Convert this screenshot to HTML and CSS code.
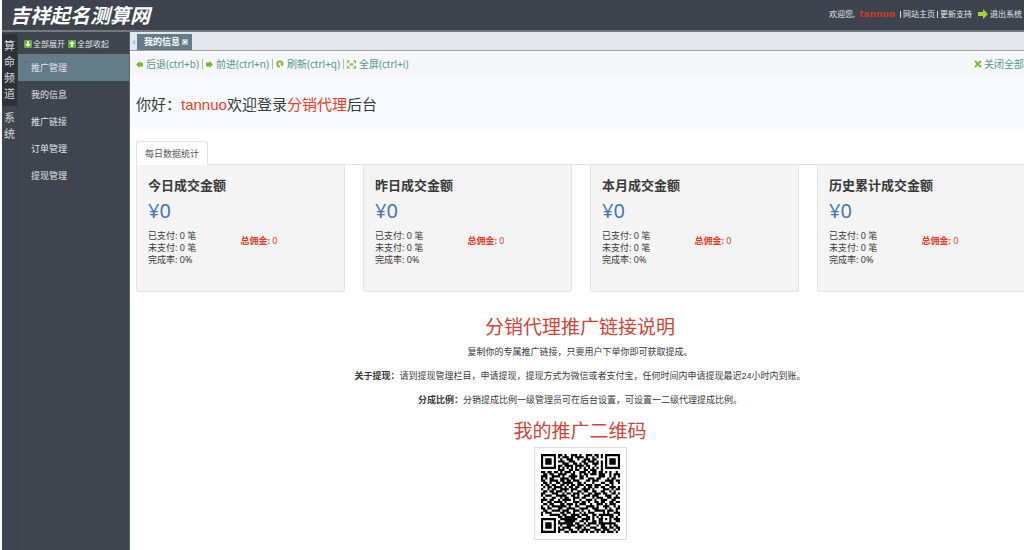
FILE: index.html
```html
<!DOCTYPE html>
<html lang="zh-CN">
<head>
<meta charset="utf-8">
<title>吉祥起名测算网</title>
<link rel="stylesheet" href="styles.css">
</head>
<body>
<div class="app">
  <header class="header">
    <h1 class="logo">吉祥起名测算网</h1>
    <nav class="account">
      <span>欢迎您,</span><strong class="user">tannuo</strong><i class="bar"></i><a href="#">网站主页</a><i class="bar"></i><a href="#">更新支持</a>
      <a href="#" class="logout"><svg width="10" height="10" viewBox="0 0 10 10"><path d="M0 3h5V0l5 5-5 5V7H0z" fill="#a5d534"/></svg>退出系统</a>
    </nav>
  </header>
  <div class="body">
    <nav class="rail">
      <button class="rail-item active">算命频道</button>
      <button class="rail-item">系统</button>
    </nav>
    <aside class="side">
      <div class="fold">
        <button><svg width="8" height="8" viewBox="0 0 8 8"><rect width="8" height="8" rx="1" fill="#62b32b"/><path d="M3 1h2v3h2L4 7 1 4h2z" fill="#fff"/></svg>全部展开</button>
        <button><svg width="8" height="8" viewBox="0 0 8 8"><rect width="8" height="8" rx="1" fill="#62b32b"/><path d="M3 7h2V4h2L4 1 1 4h2z" fill="#fff"/></svg>全部收起</button>
      </div>
      <a href="#" class="menu-item selected"><svg class="caret" width="5" height="3" viewBox="0 0 5 3"><path d="M0 0h5L2.500 3z" fill="#446f98"/></svg>推广管理</a>
      <a href="#" class="menu-item">我的信息</a>
      <a href="#" class="menu-item">推广链接</a>
      <a href="#" class="menu-item">订单管理</a>
      <a href="#" class="menu-item">提现管理</a>
    </aside>
    <main class="main">
      <div class="tabs">
        <button class="scroll" aria-label="向左"><svg width="3" height="5" viewBox="0 0 3 5"><path d="M3 0v5L0 2.500z" fill="#a9b9cf"/></svg></button>
        <button class="tab">我的信息<svg width="6" height="6" viewBox="0 0 6 6"><rect width="6" height="6" rx="1" fill="#a9bfe2"/><path d="M1.500 1.500l3 3m0-3l-3 3" stroke="#fff"/></svg></button>
      </div>
      <div class="toolbar">
        <button><svg width="7" height="7" viewBox="0 0 7 7"><path d="M0 3.500L3.500 0v1.500H7v4H3.500V7z" fill="#7cb82f"/></svg>后退(ctrl+b)</button>
        <button><svg width="7" height="7" viewBox="0 0 7 7"><path d="M7 3.500L3.500 0v1.500H0v4h3.500V7z" fill="#7cb82f"/></svg>前进(ctrl+n)</button>
        <button><svg width="8" height="8" viewBox="0 0 9 9"><path d="M4.500 7.500A3 3 0 1 1 7.300 4" fill="none" stroke="#7cb82f" stroke-width="2"/><path d="M4.500 4H9L7 7z" fill="#7cb82f"/></svg>刷新(ctrl+q)</button>
        <button><svg width="9" height="9" viewBox="0 0 10 9"><path d="M.7 3V.7H3M7 .7h2.300V3M9.300 6v2.300H7M3 8.300H.7V6" fill="none" stroke="#7cb82f" stroke-width="1.400"/><path d="M3 3h4v3H3z" fill="#9ccc5c"/></svg>全屏(ctrl+i)</button>
        <button class="close-all"><svg width="8" height="8" viewBox="0 0 8 8"><path d="M1 1l6 6m0-6L1 7" stroke="#7cb82f" stroke-width="1.800"/></svg>关闭全部</button>
      </div>
      <h2 class="welcome">你好：<em>tannuo</em>欢迎登录<em>分销代理</em>后台</h2>
      <div class="content">
        <div class="stat-tabs"><button class="stat-tab">每日数据统计</button></div>
        <div class="cards">
          <section class="card"><h3>今日成交金额</h3><p class="amount">¥0</p><div class="detail"><div>已支付: 0 笔<br>未支付: 0 笔<br>完成率: 0%</div><div class="fee"><b>总佣金:</b> 0</div></div></section>
          <section class="card"><h3>昨日成交金额</h3><p class="amount">¥0</p><div class="detail"><div>已支付: 0 笔<br>未支付: 0 笔<br>完成率: 0%</div><div class="fee"><b>总佣金:</b> 0</div></div></section>
          <section class="card"><h3>本月成交金额</h3><p class="amount">¥0</p><div class="detail"><div>已支付: 0 笔<br>未支付: 0 笔<br>完成率: 0%</div><div class="fee"><b>总佣金:</b> 0</div></div></section>
          <section class="card"><h3>历史累计成交金额</h3><p class="amount">¥0</p><div class="detail"><div>已支付: 0 笔<br>未支付: 0 笔<br>完成率: 0%</div><div class="fee"><b>总佣金:</b> 0</div></div></section>
        </div>
        <section class="guide">
          <h2>分销代理推广链接说明</h2>
          <p>复制你的专属推广链接，只要用户下单你即可获取提成。</p>
          <p><b>关于提现：</b>请到提现管理栏目，申请提现，提现方式为微信或者支付宝，任何时间内申请提现最迟24小时内到账。</p>
          <p><b>分成比例：</b>分销提成比例一级管理员可在后台设置，可设置一二级代理提成比例。</p>
          <h2>我的推广二维码</h2>
          <div class="qr"><svg id="qr" width="79" height="79" viewBox="0 0 37 37" role="img" aria-label="二维码"><path fill="#000"/></svg></div>
        </section>
      </div>
    </main>
  </div>
</div>
<script src="qr.js"></script>
</body>
</html>
```
FILE: styles.css
```css
* { box-sizing: border-box; }
body {
  margin: 0;
  background: #fff;
  color: #3a3a3a;
  font: 9px/12px "Noto Sans", "Noto Sans CJK SC", sans-serif;
  overflow: hidden;
}
h1, h2, h3, p { margin: 0; font-weight: 400; }
button { border: 0; padding: 0; margin: 0; background: none; color: inherit; font: inherit; white-space: nowrap; }
a { color: inherit; text-decoration: none; }
svg { display: block; flex: none; }

.app { display: flex; flex-direction: column; min-height: 100vh; padding-left: 2px; }
.header {
  display: flex;
  align-items: center;
  justify-content: space-between;
  height: 32px;
  padding: 0 2px 0 8px;
  background: #3e444d;
  border-bottom: 2px solid #76797c;
  color: #e4e6e8;
}
.logo { color: #fff; font: italic 700 20px/30px "Noto Sans CJK SC", sans-serif; }
.account { display: flex; align-items: center; padding-bottom: 2px; font-size: 8px; white-space: nowrap; }
.user { margin: 0 3px 0 4px; color: #cf3a2e; font: bold 9px/12px "DejaVu Sans", sans-serif; }
.bar { width: 1px; height: 7px; margin: 0 2px; background: #d5d7da; }
.logout { display: flex; align-items: center; gap: 2px; margin-left: 6px; }

.body { display: flex; flex: 1; }
.rail { width: 16px; padding-top: 2px; background: #3e454e; border-right: 1px solid #373d46; }
.rail-item { display: block; width: 100%; padding: 4px 2px; font-size: 11px; line-height: 16px; white-space: normal; word-break: break-all; color: #d5d8dc; }
.rail-item.active { background: #2e3238; }
.side { width: 112px; flex: none; background: #3e454e; border-right: 1px solid #59616b; color: #e0e3e6; }
.fold { display: flex; gap: 3px; height: 22px; padding: 2px 0 0 6px; font-size: 8px; }
.fold button { display: flex; align-items: center; gap: 1px; }
.menu-item { display: block; position: relative; padding-left: 13px; line-height: 27px; }
.selected { background: #647b88; }
.caret { position: absolute; left: 5px; top: 7px; }

.main { flex: 1; min-width: 0; overflow: hidden; }
.tabs { display: flex; align-items: flex-end; height: 19px; background: #e4e7ec; border-bottom: 1px solid #98a1ab; }
.scroll { display: flex; align-items: center; justify-content: center; width: 7px; height: 15px; background: #dfe8f5; }
.tab { display: flex; align-items: center; gap: 2px; height: 16px; padding: 0 4px 0 7px; background: #647b88; color: #fff; font-weight: 700; }
.toolbar { display: flex; align-items: center; height: 22px; margin-top: 2px; padding-left: 6px; background: #f5f6fa; color: #589888; font-size: 10px; }
.toolbar button { display: flex; align-items: center; gap: 3px; }
.toolbar button + button { margin-left: 3px; padding-left: 3px; border-left: 1px solid #b5b8bb; line-height: 10px; }
.toolbar .close-all { margin-left: auto; border-left: 0; gap: 2px; }
.welcome { padding: 16px 6px 10px; background: #f7fbff; font: 15px/28px "Liberation Sans", "Noto Sans CJK SC", sans-serif; }
.welcome em { color: #f23a22; font-style: normal; }

.content { padding: 12px 0 0 6px; }
.stat-tabs { display: flex; border-bottom: 1px solid #e2e2e2; }
.stat-tab { height: 24px; margin-bottom: -1px; padding: 0 8px; border: 1px solid #e2e2e2; border-bottom: 0; border-radius: 3px 3px 0 0; background: #fff; color: #555; }
.cards { display: grid; grid-template-columns: repeat(4, 1fr); gap: 18px; margin-right: -2px; }
.card { padding: 10px 11px 25px; background: #f4f4f4; border: 1px solid #e3e3e3; border-top: 0; border-radius: 0 0 3px 3px; white-space: nowrap; }
.card h3 { font-size: 13px; line-height: 20px; font-weight: 700; }
.amount { margin: 4px 0 7px; color: #4477b8; font: 20px/24px "Noto Sans", sans-serif; }
.detail { display: grid; grid-template-columns: 1fr 1fr; align-items: center; }
.fee { padding-bottom: 14px; color: #ea3a26; }

.guide { padding-top: 22px; text-align: center; }
.guide h2 { color: #d14338; font-size: 19px; line-height: 26px; }
.guide p { margin: 6px 0 12px; font-family: "Liberation Sans", "Noto Sans CJK SC", sans-serif; }
.qr { display: inline-block; margin-top: 3px; padding: 6px; border: 1px solid #ddd; background: #fff; }
```
FILE: qr.js
```js
const rows = [
  '1111111011010011101001110110101111111',
  '1000001010111010111101001010101000001',
  '1011101001001110010011101100001011101',
  '1011101011100111000110111010101011101',
  '1011101000111001101011001110101011101',
  '1000001011011110111101100100101000001',
  '1111111010101010101010101010101111111',
  '0000000011100110110011011100100000000',
  '1101101101011101001110101101101010010',
  '0110110011110011001011011101110010111',
  '1110011110100111101101000001110010101',
  '1010110001111011001100111011000101100',
  '1100111101101101110001101110001111011',
  '0110100110111110011010001000110011001',
  '1011011001101011011101110111001101000',
  '0101101111010110110010110110110011101',
  '1001011001111011100111101000011101011',
  '0110110111010010011011001100110010100',
  '1100011100101101110100110111011001101',
  '1011100111110011010011101110001110010',
  '0100011001011001110110001011100110111',
  '1110110010111101001001110100111001100',
  '1001101111010001110110100110110011011',
  '0110110001101110101110010011101011100',
  '1001011111110100110001111010011100101',
  '1101100011001111001111001110001010011',
  '0110011110111001110100100111110111010',
  '1011100001101101001010111000010100111',
  '1000111110110011110111001101111111001',
  '0000000011011111011001101010100011010',
  '1111111001111111100111101001101010111',
  '1000001010011111001101001101100010011',
  '1011101011111110110010111101111111100',
  '1011101001001111011101100010110010110',
  '1011101010111100111010011100111011011',
  '1000001011100110010111100111011100101',
  '1111111010011011101101011010110111010'
];
const path = rows.flatMap((row, y) =>
  [...row].map((cell, x) => cell === '1' ? `M${x} ${y}h1v1h-1z` : '')
).join('');
document.querySelector('#qr path').setAttribute('d', path);
```
